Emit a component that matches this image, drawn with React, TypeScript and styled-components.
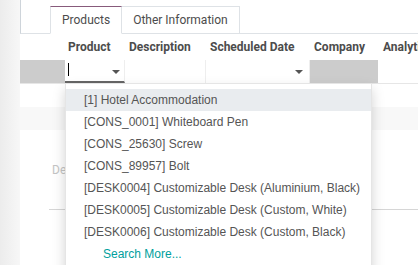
import React from "react";
import styled, { createGlobalStyle } from "styled-components";

const Global = createGlobalStyle`
  html, body { margin: 0; padding: 0; background: #fff; }
  body { font-family: Roboto, "Liberation Sans", Arial, sans-serif; font-size: 12px; color: #4c4c4c; overflow: hidden; }
`;

const Page = styled.div`
  position: relative;
  width: 418px;
  height: 265px;
  display: flex;
  overflow: hidden;
`;

const SideShade = styled.div`
  width: 20px;
  flex: none;
  background: linear-gradient(to right, #ececec, #f7f7f7);
`;

const Sheet = styled.div`
  flex: 1;
  display: flex;
  flex-direction: column;
  background: #fff;
  min-width: 0;
`;

const TabBar = styled.div`
  height: 34px;
  box-sizing: border-box;
  display: flex;
  align-items: flex-end;
  padding-left: 29px;
  border-left: 1px solid #ced4da;
  border-bottom: 1px solid #dee2e6;
`;

const Tab = styled.div<{ $active?: boolean }>`
  height: 28px;
  box-sizing: border-box;
  padding: 0 11px;
  display: flex;
  align-items: center;
  margin-bottom: -1px;
  background: #fff;
  color: #4c4c4c;
  font-size: 12px;
  border: 1px solid #dee2e6;
  border-top: 1px solid ${(p) => (p.$active ? "#875a7b" : "#dee2e6")};
  border-bottom: 1px solid ${(p) => (p.$active ? "#fff" : "#dee2e6")};
  & + & { border-left: none; }
`;

const HeaderRow = styled.div`
  height: 26px;
  display: flex;
  align-items: center;
  white-space: nowrap;
`;

const HeadCell = styled.div<{ $w: number }>`
  width: ${(p) => p.$w}px;
  flex: none;
  box-sizing: border-box;
  padding-left: 3px;
  font-weight: 700;
  color: #4c4c4c;
`;

const EditRow = styled.div`
  height: 23px;
  display: flex;
  border-bottom: 1px solid #e6e6e6;
`;

const Cell = styled.div<{ $w: number; $gray?: boolean }>`
  width: ${(p) => p.$w}px;
  flex: none;
  box-sizing: border-box;
  background: ${(p) => (p.$gray ? "#cccccc" : "#fff")};
  position: relative;
  border-right: 1px solid ${(p) => (p.$gray ? "#cccccc" : "#eeeeee")};
`;

const InputCell = styled(Cell)`
  border-bottom: 2px solid #666;
  height: 23px;
`;

const Caret = styled.div`
  position: absolute;
  left: 3px;
  top: 3px;
  width: 1px;
  height: 13px;
  background: #000;
`;

const Arrow = styled.div<{ $right: number }>`
  position: absolute;
  right: ${(p) => p.$right}px;
  top: 10px;
  width: 0;
  height: 0;
  border-left: 4px solid transparent;
  border-right: 4px solid transparent;
  border-top: 4px solid #555;
`;

const PlainRow = styled.div<{ $bg?: string }>`
  height: 23px;
  background: ${(p) => p.$bg || "#fff"};
`;

const NoteArea = styled.div`
  margin-left: 29px;
  height: 79px;
  border-bottom: 1px solid #d6d6d6;
  display: flex;
  align-items: center;
  padding-left: 3px;
  color: #c4c4c4;
`;

const Dropdown = styled.ul`
  position: absolute;
  left: 65px;
  top: 83px;
  width: 307px;
  margin: 0;
  padding: 5px 0 0;
  list-style: none;
  background: #fff;
  border: 1px solid rgba(0, 0, 0, 0.1);
  box-sizing: border-box;
  height: 200px;
  box-shadow: 0 6px 12px rgba(0, 0, 0, 0.175);
  font-family: "Liberation Sans", Arial, sans-serif;
  font-size: 12px;
`;

const Item = styled.li<{ $active?: boolean; $more?: boolean }>`
  height: 22px;
  line-height: 22px;
  padding-left: ${(p) => (p.$more ? 37 : 18)}px;
  background: ${(p) => (p.$active ? "#e9ecef" : "transparent")};
  color: ${(p) => (p.$more ? "#00a09d" : "#555555")};
  white-space: nowrap;
`;

const items = [
  "[1] Hotel Accommodation",
  "[CONS_0001] Whiteboard Pen",
  "[CONS_25630] Screw",
  "[CONS_89957] Bolt",
  "[DESK0004] Customizable Desk (Aluminium, Black)",
  "[DESK0005] Customizable Desk (Custom, White)",
  "[DESK0006] Customizable Desk (Custom, Black)",
];

export default function App() {
  return (
    <Page>
      <Global />
      <SideShade />
      <Sheet>
        <TabBar>
          <Tab $active>Products</Tab>
          <Tab>Other Information</Tab>
        </TabBar>
        <HeaderRow>
          <HeadCell $w={45} />
          <HeadCell $w={61}>Product</HeadCell>
          <HeadCell $w={81}>Description</HeadCell>
          <HeadCell $w={104}>Scheduled Date</HeadCell>
          <HeadCell $w={69}>Company</HeadCell>
          <HeadCell $w={60}>Analytic Account</HeadCell>
        </HeaderRow>
        <EditRow>
          <Cell $w={45} $gray />
          <InputCell $w={60}>
            <Caret />
            <Arrow $right={4} />
          </InputCell>
          <Cell $w={81} />
          <Cell $w={104}>
            <Arrow $right={6} />
          </Cell>
          <Cell $w={68} $gray />
        </EditRow>
        <PlainRow />
        <PlainRow $bg="#f8f8f8" />
        <NoteArea>Default terms</NoteArea>
      </Sheet>
      <Dropdown>
        {items.map((t, i) => (
          <Item key={t} $active={i === 0}>
            {t}
          </Item>
        ))}
        <Item $more>Search More...</Item>
      </Dropdown>
    </Page>
  );
}
